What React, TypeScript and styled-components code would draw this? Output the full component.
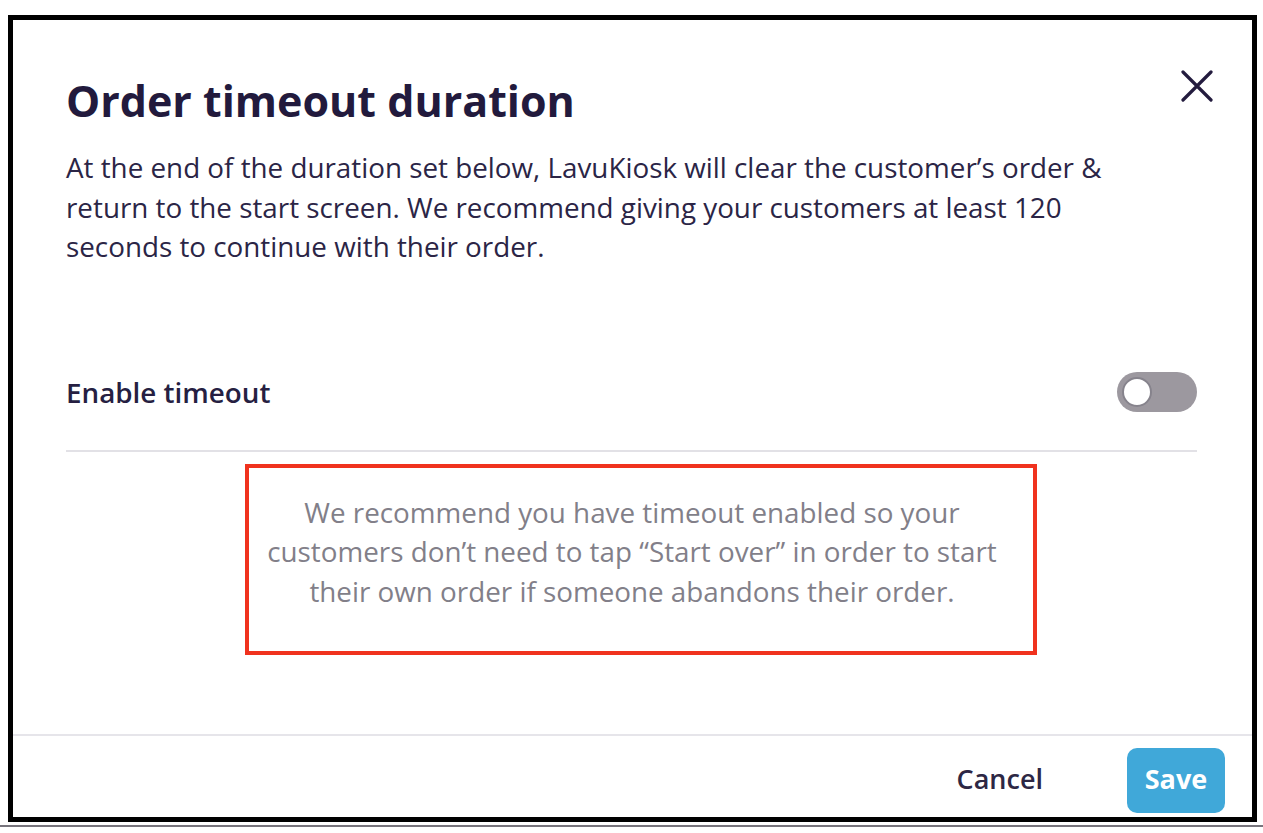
import React, { useState } from 'react';
import styled, { createGlobalStyle } from 'styled-components';

const GlobalStyle = createGlobalStyle`
  html, body {
    margin: 0;
    padding: 0;
    background: #ffffff;
  }
  body {
    font-family: "Open Sans", "Noto Sans", "Liberation Sans", sans-serif;
    -webkit-font-smoothing: antialiased;
  }
  * { box-sizing: border-box; }
`;

function CloseIcon() {
  return (
    <svg width="32" height="32" viewBox="0 0 32 32" fill="none">
      <path
        d="M2 2 L30 30 M30 2 L2 30"
        stroke="#231b3e"
        strokeWidth="3.2"
        strokeLinecap="round"
      />
    </svg>
  );
}

export default function App() {
  const [enabled, setEnabled] = useState(false);

  return (
    <>
      <GlobalStyle />
      <Frame>
        {/* --- Header --- */}
        <Header>
          <Title>Order timeout duration</Title>
          <CloseButton aria-label="Close">
            <CloseIcon />
          </CloseButton>
        </Header>

        {/* --- Body --- */}
        <Body>
          <Description>
            At the end of the duration set below, LavuKiosk will clear the customer’s order &amp;
            return to the start screen. We recommend giving your customers at least 120
            seconds to continue with their order.
          </Description>

          <SettingRow>
            <SettingLabel>Enable timeout</SettingLabel>
            <Toggle $on={enabled} onClick={() => setEnabled(!enabled)} aria-label="Enable timeout">
              <Knob />
            </Toggle>
          </SettingRow>

          <Note>
            We recommend you have timeout enabled so your customers don’t need to tap
            “Start over” in order to start their own order if someone abandons their order.
          </Note>
        </Body>

        {/* --- Footer --- */}
        <Footer>
          <CancelButton>Cancel</CancelButton>
          <SaveButton>Save</SaveButton>
        </Footer>
      </Frame>
      <ShadowLine />
    </>
  );
}

// --- Styled Components ---

const Frame = styled.div`
  margin: 15px 6px 0 8px;
  height: 807px;
  border: 5px solid #000000;
  background: #ffffff;
  display: flex;
  flex-direction: column;
`;

const Header = styled.header`
  display: flex;
  align-items: flex-start;
  justify-content: space-between;
  padding: 50px 39px 0 53px;
`;

const Title = styled.h1`
  margin: 4px 0 0;
  font-size: 43px;
  line-height: 54px;
  font-weight: 700;
  color: #221a3d;
`;

const CloseButton = styled.button`
  width: 32px;
  height: 32px;
  padding: 0;
  border: none;
  background: none;
  cursor: pointer;
  display: flex;
`;

const Body = styled.div`
  flex: 1;
  padding: 0 55px 0 53px;
`;

const Description = styled.p`
  margin: 20px 0 0;
  max-width: 1080px;
  font-size: 27.8px;
  line-height: 39.5px;
  color: #2b2546;
`;

const SettingRow = styled.div`
  display: flex;
  align-items: center;
  justify-content: space-between;
  margin-top: 105px;
  padding-bottom: 38px;
  border-bottom: 2px solid #e2e1e6;
`;

const SettingLabel = styled.span`
  font-size: 27.8px;
  font-weight: 600;
  color: #261f42;
`;

const Toggle = styled.button<{ $on: boolean }>`
  width: 80px;
  height: 40px;
  padding: 0 5px;
  border: none;
  border-radius: 20px;
  background: ${p => (p.$on ? '#40a8d9' : '#9c989f')};
  display: flex;
  align-items: center;
  justify-content: ${p => (p.$on ? 'flex-end' : 'flex-start')};
  cursor: pointer;
`;

const Knob = styled.span`
  width: 30px;
  height: 30px;
  border-radius: 50%;
  background: #ffffff;
  border: 2px solid #86838c;
`;

const Note = styled.p`
  margin: 12px 0 0 179px;
  width: 792px;
  padding: 25px 18px 40px 0;
  border: 4px solid #f0321e;
  text-align: center;
  font-size: 27.8px;
  line-height: 39.5px;
  color: #827f89;
`;

const Footer = styled.footer`
  display: flex;
  align-items: center;
  justify-content: flex-end;
  gap: 84px;
  border-top: 2px solid #e6e5ea;
  padding: 12px 27px 4px 0;
`;

const CancelButton = styled.button`
  border: none;
  background: none;
  padding: 0 0 4px;
  font-family: inherit;
  font-size: 27px;
  font-weight: 600;
  color: #2d2744;
  cursor: pointer;
`;

const SaveButton = styled.button`
  width: 98px;
  height: 65px;
  padding: 0 0 4px;
  border: none;
  border-radius: 10px;
  background: #40a8d9;
  color: #ffffff;
  font-family: inherit;
  font-size: 27px;
  font-weight: 700;
  cursor: pointer;
`;

const ShadowLine = styled.div`
  margin: 3px 0 0;
  height: 2px;
  background: #77747c;
`;
